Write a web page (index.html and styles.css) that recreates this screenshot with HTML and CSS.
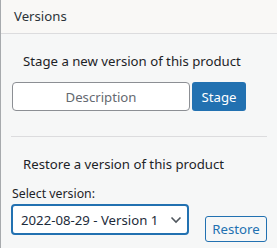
FILE: index.html
```html
<!DOCTYPE html>
<html lang="en">
<head>
    <meta charset="UTF-8">
    <meta name="viewport" content="width=device-width, initial-scale=1.0">
    <title>Versions</title>
    <link rel="stylesheet" href="styles.css">
</head>
<body>
    <div class="panel">
        <div class="panel-header">Versions</div>

        <div class="panel-body">
            <div class="section">
                <p class="section-title">Stage a new version of this product</p>
                <div class="stage-row">
                    <input type="text" class="description" placeholder="Description">
                    <button class="btn-primary">Stage</button>
                </div>
            </div>

            <hr class="divider">

            <div class="section">
                <p class="section-title restore-title">Restore a version of this product</p>
                <label for="versionSelect" class="select-label">Select version:</label>
                <div class="restore-row">
                    <div class="select-wrap">
                        <select id="versionSelect" class="version-select">
                            <option>2022-08-29 - Version 1</option>
                        </select>
                        <svg class="chevron" width="12" height="8" viewBox="0 0 12 8">
                            <path d="M1.5 1.5 L6 6 L10.5 1.5" fill="none" stroke="#50575e" stroke-width="1.6"/>
                        </svg>
                    </div>
                    <button class="btn-secondary">Restore</button>
                </div>
            </div>
        </div>
    </div>
</body>
</html>
```

FILE: styles.css
```css
html, body {
    margin: 0;
    padding: 0;
    height: 100%;
}
body {
    font-family: 'Noto Sans', sans-serif;
    font-size: 12.3px;
    color: #1d2327;
    background-color: #f6f7f7;
}
.panel {
    min-height: 100%;
    border-left: 1px solid #a7aaad;
    box-sizing: border-box;
}
.panel-header {
    height: 33px;
    line-height: 33px;
    padding-left: 13px;
    font-size: 13.2px;
    color: #2c3338;
    background-color: #f9f8f6;
    border-bottom: 1px solid #dcdcde;
}
.panel-body {
    padding: 0 10px 0 10px;
}
.section-title {
    margin: 0;
    padding-left: 12px;
    font-size: 13.2px;
}
.section:first-child .section-title {
    padding-top: 18px;
}
.stage-row {
    display: flex;
    margin-top: 12px;
}
.description {
    width: 178px;
    height: 29px;
    box-sizing: border-box;
    margin: 0 0 0 1px;
    border: 1px solid #8c8f94;
    border-radius: 4px;
    background: #ffffff;
    font-family: 'Noto Sans', sans-serif;
    font-size: 13.2px;
    text-align: center;
}
.description::placeholder {
    color: #646970;
}
.btn-primary {
    margin-left: 2px;
    width: 54px;
    height: 29px;
    border: none;
    border-radius: 3px;
    background-color: #2271b1;
    color: #ffffff;
    font-family: 'Noto Sans', sans-serif;
    font-size: 13.2px;
    cursor: pointer;
}
.divider {
    margin: 25px 0 0 0;
    border: none;
    border-top: 1px solid #dcdcde;
}
.restore-title {
    padding-top: 18px;
}
.select-label {
    display: block;
    margin-top: 13px;
    padding-left: 1px;
    font-size: 12.3px;
    line-height: 16px;
}
.restore-row {
    display: flex;
    align-items: flex-start;
    margin-top: 2px;
}
.select-wrap {
    position: relative;
}
.version-select {
    width: 178px;
    height: 31px;
    box-sizing: border-box;
    padding: 0 24px 0 8px;
    border: 2px solid #2271b1;
    border-radius: 4px;
    background: #ffffff;
    color: #1d2b3a;
    font-family: 'Noto Sans', sans-serif;
    font-size: 13.2px;
    -webkit-appearance: none;
    appearance: none;
}
.chevron {
    position: absolute;
    right: 7px;
    top: 12px;
}
.btn-secondary {
    margin: 12px 0 0 16px;
    width: 62px;
    height: 26px;
    border: 1px solid #2271b1;
    border-radius: 3px;
    background-color: #f6f7f7;
    color: #2271b1;
    font-family: 'Noto Sans', sans-serif;
    font-size: 13.2px;
    cursor: pointer;
}
```
